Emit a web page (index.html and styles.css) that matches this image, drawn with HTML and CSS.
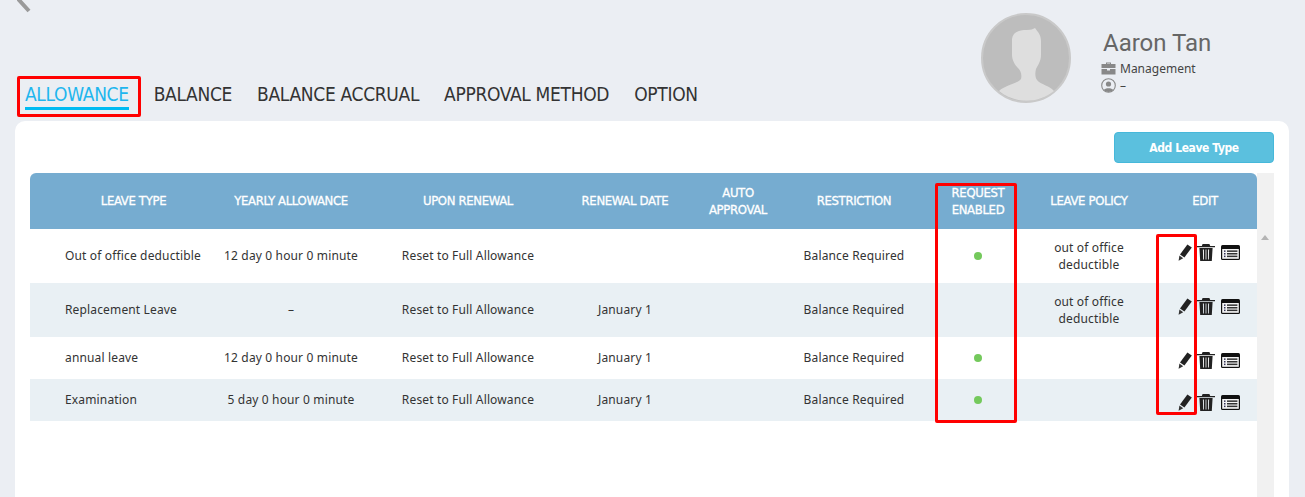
FILE: index.html
```html
<!DOCTYPE html>
<html lang="en">
<head>
<meta charset="utf-8">
<title>Leave Types</title>
<link rel="stylesheet" href="styles.css">
</head>
<body>
<svg class="defs" width="0" height="0" aria-hidden="true">
  <symbol id="pencil" viewBox="0 0 14 17">
    <path d="M9.4 0.4 L13.8 3.4 L6.4 13.4 L2 10.4 Z" fill="#222"/>
    <path d="M1.4 11.6 L5.2 14.2 L0.6 16.8 Z" fill="#333"/>
  </symbol>
  <symbol id="trash" viewBox="0 0 18 17">
    <path d="M4.8 2 L5.6 0 H12.4 L13.2 2 H18 V3.2 H0 V2 Z" fill="#222"/>
    <path d="M2.4 4 H15.6 L14.8 17 H3.2 Z M5.9 5.5 L6.2 15.5 H7 L6.9 5.5 Z M8.6 5.5 V15.5 H9.4 V5.5 Z M11.1 5.5 L11 15.5 H11.8 L12.1 5.5 Z" fill="#222" fill-rule="evenodd"/>
  </symbol>
  <symbol id="list" viewBox="0 0 19 15">
    <rect x="0" y="0" width="19" height="15" rx="1.5" fill="#111"/>
    <rect x="1.2" y="4" width="16.6" height="9.8" fill="#f4f4f4"/>
    <rect x="6" y="5.4" width="10.4" height="1.5" fill="#333"/>
    <rect x="6" y="8" width="10.4" height="1.5" fill="#333"/>
    <rect x="6" y="10.6" width="10.4" height="1.5" fill="#333"/>
    <rect x="3" y="5.4" width="1.5" height="1.5" fill="#335"/>
    <rect x="3" y="8" width="1.5" height="1.5" fill="#335"/>
    <rect x="3" y="10.6" width="1.5" height="1.5" fill="#335"/>
  </symbol>
</svg>

<header class="top">
  <div class="top-left">
    <svg class="back" width="16" height="16" viewBox="0 0 16 16" aria-hidden="true"><path d="M12 -11 L1 -1 L12 11" fill="none" stroke="#9a9a9a" stroke-width="4"/></svg>
    <nav class="tabs">
      <a class="tab active">ALLOWANCE</a>
      <a class="tab">BALANCE</a>
      <a class="tab">BALANCE ACCRUAL</a>
      <a class="tab">APPROVAL METHOD</a>
      <a class="tab">OPTION</a>
    </nav>
  </div>
  <div class="profile">
    <svg class="avatar" width="90" height="90" viewBox="0 0 90 90" aria-hidden="true">
      <circle cx="45" cy="45" r="44" fill="#bdbdbd" stroke="#c9c9c9" stroke-width="2"/>
      <path d="M18 78 C24 72 36 71 40 66 C41 62 40 58 37 55 C34 52 31 47 31 42 L31 26 C32 19 38 17 46 17 C50 17 52 16 54 15 C57 19 60 22 60 28 L60 42 C60 48 57 52 55 56 C54 60 54 64 56 67 C60 72 68 72 73 78 C57 91 34 91 18 78 Z" fill="#dedede"/>
    </svg>
    <div class="who">
      <div class="name">Aaron Tan</div>
      <div class="meta">
        <svg width="15" height="13" viewBox="0 0 15 13" aria-hidden="true"><path d="M5 2 V0.5 H10 V2 H14.5 V6 H0.5 V2 Z M6 2 H9 V1.4 H6 Z M0.5 7 H6 V8.5 H9 V7 H14.5 V12.5 H0.5 Z" fill="#888" fill-rule="evenodd"/></svg>
        <span>Management</span>
      </div>
      <div class="meta">
        <svg width="15" height="15" viewBox="0 0 15 15" aria-hidden="true"><circle cx="7.5" cy="7.5" r="6.8" fill="none" stroke="#888" stroke-width="1.1"/><circle cx="7.5" cy="6" r="2.6" fill="#888"/><path d="M2.8 12 C4 9.5 11 9.5 12.2 12 C10 14.6 5 14.6 2.8 12 Z" fill="#888"/></svg>
        <span>–</span>
      </div>
    </div>
  </div>
</header>

<main class="card">
  <div class="actions"><button class="add">Add Leave Type</button></div>
  <div class="table-wrap">
    <table class="leave">
      <colgroup>
        <col class="c1"><col class="c2"><col class="c3"><col class="c4"><col class="c5"><col class="c6"><col class="c7"><col class="c8"><col class="c9">
      </colgroup>
      <thead>
        <tr>
          <th class="first">LEAVE TYPE</th><th>YEARLY ALLOWANCE</th><th>UPON RENEWAL</th><th>RENEWAL DATE</th><th>AUTO<br>APPROVAL</th><th>RESTRICTION</th><th>REQUEST<br>ENABLED</th><th>LEAVE POLICY</th><th class="edit">EDIT</th>
        </tr>
      </thead>
      <tbody>
        <tr class="tall">
          <td class="first">Out of office deductible</td><td>12 day 0 hour 0 minute</td><td>Reset to Full Allowance</td><td></td><td></td><td>Balance Required</td><td><span class="dot"></span></td><td class="policy">out of office<br>deductible</td>
          <td class="icons"><svg class="i-pencil"><use href="#pencil"/></svg><svg class="i-trash"><use href="#trash"/></svg><svg class="i-list"><use href="#list"/></svg></td>
        </tr>
        <tr class="tall alt">
          <td class="first">Replacement Leave</td><td>–</td><td>Reset to Full Allowance</td><td>January 1</td><td></td><td>Balance Required</td><td></td><td class="policy">out of office<br>deductible</td>
          <td class="icons"><svg class="i-pencil"><use href="#pencil"/></svg><svg class="i-trash"><use href="#trash"/></svg><svg class="i-list"><use href="#list"/></svg></td>
        </tr>
        <tr class="short">
          <td class="first">annual leave</td><td>12 day 0 hour 0 minute</td><td>Reset to Full Allowance</td><td>January 1</td><td></td><td>Balance Required</td><td><span class="dot"></span></td><td></td>
          <td class="icons"><svg class="i-pencil"><use href="#pencil"/></svg><svg class="i-trash"><use href="#trash"/></svg><svg class="i-list"><use href="#list"/></svg></td>
        </tr>
        <tr class="short alt">
          <td class="first">Examination</td><td>5 day 0 hour 0 minute</td><td>Reset to Full Allowance</td><td>January 1</td><td></td><td>Balance Required</td><td><span class="dot"></span></td><td></td>
          <td class="icons"><svg class="i-pencil"><use href="#pencil"/></svg><svg class="i-trash"><use href="#trash"/></svg><svg class="i-list"><use href="#list"/></svg></td>
        </tr>
      </tbody>
    </table>
    <div class="scrollbar"><span class="arrow"></span></div>
  </div>
</main>

<div class="mark mark-tab"></div>
<div class="mark mark-request"></div>
<div class="mark mark-edit"></div>
</body>
</html>
```

FILE: styles.css
```css
* { box-sizing: border-box; }
html, body { margin: 0; height: 497px; overflow: hidden; }
body {
  position: relative;
  background: #ebeef3;
  font-family: "Noto Sans", "Open Sans", sans-serif;
  color: #333;
}
.defs { position: absolute; }

.top {
  height: 121px;
  display: flex;
  justify-content: space-between;
  padding: 0 94px 0 17px;
}
.top-left { display: flex; flex-direction: column; justify-content: space-between; }
.back { display: block; }
.tabs { display: flex; gap: 25px; padding: 0 0 11px 8px; }
.tab {
  font-family: "DejaVu Sans Condensed", "DejaVu Sans", sans-serif;
  font-size: 19px;
  line-height: 26px;
  letter-spacing: -0.32px;
  border-bottom: 3px solid transparent;
  color: #333;
  white-space: nowrap;
}
.tab.active { color: #1fb6ee; border-bottom-color: #00bbf2; }

.profile { display: flex; align-items: flex-start; padding-top: 13px; }
.avatar { display: block; }
.who { margin-left: 30px; padding-top: 13px; width: 110px; }
.name { font-family: Roboto, sans-serif; font-size: 24px; line-height: 34px; color: #666; padding-left: 2px; white-space: nowrap; }
.meta { display: flex; align-items: center; gap: 4px; font-size: 12px; line-height: 16px; height: 17px; color: #444; white-space: nowrap; }

.card {
  margin: 0 16px 0 15px;
  height: 376px;
  background: #fff;
  border-radius: 10px 10px 0 0;
  padding: 11px 15px 0;
}
.actions { display: flex; justify-content: flex-end; height: 41px; }
.add {
  width: 160px;
  height: 31px;
  background: #5bc0de;
  border: 1px solid #46b8da;
  border-radius: 4px;
  color: #fff;
  font: 700 12px "DejaVu Sans Condensed", "DejaVu Sans", sans-serif;
  letter-spacing: -0.4px;
}
.table-wrap { display: flex; align-items: stretch; height: 324px; }
.leave {
  width: 1227px;
  height: 248px;
  border-collapse: separate;
  border-spacing: 0;
  table-layout: fixed;
  font-size: 12px;
  letter-spacing: 0.15px;
  align-self: flex-start;
}
.c1 { width: 183px; } .c2 { width: 156px; } .c3 { width: 198px; }
.c4 { width: 116px; } .c5 { width: 110px; } .c6 { width: 122px; }
.c7 { width: 126px; } .c8 { width: 96px; } .c9 { width: 120px; }
.leave th {
  height: 56px;
  background: #76acd0;
  color: #fff;
  font-family: "DejaVu Sans Condensed", "DejaVu Sans", sans-serif;
  font-size: 13px;
  font-weight: 400;
  letter-spacing: -0.35px;
  -webkit-text-stroke: 0.3px #fff;
  line-height: 17px;
  text-align: center;
  padding: 0 0 1px;
}
.leave th:first-child { border-top-left-radius: 6px; }
.leave th:last-child { border-top-right-radius: 6px; }
.leave td { text-align: center; padding: 0 0 2px; color: #333; line-height: 17px; }
.leave td.policy { padding-bottom: 0; }
.leave .first { padding-left: 35px; padding-right: 11px; white-space: nowrap; }
.leave td.first { text-align: left; }
.leave th.edit { padding-left: 16px; }
.tall { height: 54px; }
.short { height: 42px; }
.alt td { background: #e9f0f4; }
.dot { display: inline-block; width: 8px; height: 8px; border-radius: 50%; background: #74c95c; }
.leave td.icons { text-align: left; padding: 0 0 0 41px; white-space: nowrap; }
.leave .tall td.icons { padding-bottom: 8px; }
.leave .short td.icons { padding-top: 4px; }
.icons svg { display: inline-block; vertical-align: middle; }
.i-pencil { width: 14px; height: 17px; margin-right: 5px; }
.i-trash { width: 18px; height: 17px; margin-right: 6px; }
.i-list { width: 19px; height: 15px; }
.scrollbar { width: 17px; background: #f1f1f1; padding: 62px 0 0 4px; }
.arrow { display: block; width: 0; height: 0; border: 4px solid transparent; border-top: 0; border-bottom: 5px solid #b4b4b4; }

.mark { position: absolute; border: 3px solid #f00; border-radius: 2px; pointer-events: none; }
.mark-tab { left: 17px; top: 76px; width: 124px; height: 41px; }
.mark-request { left: 935px; top: 183px; width: 82px; height: 240px; }
.mark-edit { left: 1156px; top: 234px; width: 41px; height: 181px; }
```
